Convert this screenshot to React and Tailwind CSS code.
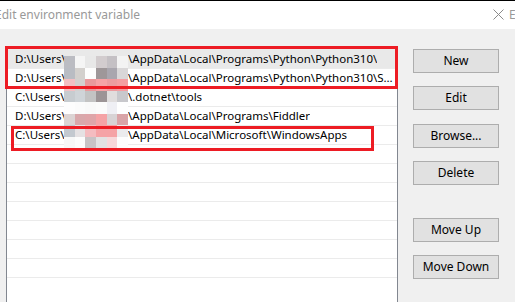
import React from 'react';

// pixelated username block, row by row
const MOSAIC = [
    ['#bbbcc2', '#f5f5f5', '#e8e8e8', '#d2ccce', '#c4c0c4', '#f3f3f3'],
    ['#b9bcc3', '#d3d0cd', '#fdfdfd', '#9e9799', '#a9a6ae', '#d9d7d8'],
    ['#f2c0c4', '#d3d0cf', '#e9999c', '#f5a3a6', '#ec9ca0', '#f49ea2'],
    ['#c7ccd0', '#cfd4d8', '#c3c3c3', '#9c9496', '#e0dddd', '#c8c8cc'],
    ['#fdfdfd', '#fbfbfb', '#f9f9f9', '#fbfbfb', '#efeff4', '#fefefe'],
    ['#dcd4d4', '#d9a8ab', '#dfa5a9', '#f5a3a6', '#d8d3d5', '#d9a4a8'],
    ['#c3c8cf', '#e5e1e3', '#f4bcc0', '#f5a3a6', '#f5a3a6', '#ebebed'],
    ['#f7f7f7', '#fcfcfc', '#c8c3c5', '#e2e2e2', '#f7d8da', '#fdfdfd'],
];

const ROWS = [
    { drive: 'D:\\Users\\', rest: '\\AppData\\Local\\Programs\\Python\\Python310\\', selected: true },
    { drive: 'D:\\Users\\', rest: '\\AppData\\Local\\Programs\\Python\\Python310\\Scripts\\' },
    { drive: 'C:\\Users\\', rest: '\\.dotnet\\tools' },
    { drive: 'D:\\Users\\', rest: '\\AppData\\Local\\Programs\\Fiddler' },
    { drive: 'C:\\Users\\', rest: '\\AppData\\Local\\Microsoft\\WindowsApps' },
];

function PathRow({ drive, rest, selected }) {
    return (
        <div className={`h-[19px] border-t border-[#ebebeb] flex items-center pl-[8px] pr-[3px] whitespace-nowrap text-[11.5px] ${selected ? 'bg-[#e9e9e9]' : ''}`}>
            <span className="w-[113px] shrink-0 overflow-hidden">{drive}</span>
            <span className="min-w-0 overflow-hidden text-ellipsis">{rest}</span>
        </div>
    );
}

function Btn({ label, className = '' }) {
    return (
        <div className={`h-[24px] w-[86px] bg-[#e1e1e1] border border-[#adadad] flex items-center justify-center text-black ${className}`}>
            {label}
        </div>
    );
}

export default function App() {
    return (
        <div className="w-[515px] h-[302px] overflow-hidden relative bg-[#f0f0f0] border-t border-black text-[12px] text-black" style={{ fontFamily: '"Segoe UI", "Noto Sans", sans-serif' }}>
            {/* title bar */}
            <div className="h-[28px] bg-white relative">
                <span className="absolute left-[-5px] top-[5px] text-[#999999] whitespace-nowrap">Edit environment variable</span>
                <svg className="absolute left-[493px] top-[8px]" width="11" height="11" viewBox="0 0 11 11">
                    <path d="M0.5 0.5 L10.5 10.5 M10.5 0.5 L0.5 10.5" stroke="#8a8a8a" strokeWidth="1" fill="none" />
                </svg>
                <span className="absolute left-[509px] top-[5px] text-[#999999]">E</span>
            </div>

            <div className="flex pt-[19px] pl-[6px]">
                {/* list */}
                <div className="w-[392px] h-[260px] bg-white border border-[#828790] shrink-0">
                    {ROWS.map((r, i) => <PathRow key={i} {...r} />)}
                    {Array.from({ length: 8 }).map((_, i) => (
                        <div key={`e${i}`} className="h-[19px] border-t border-[#ebebeb]" />
                    ))}
                </div>

                {/* buttons */}
                <div className="ml-[15px] flex flex-col pt-[1px]">
                    <Btn label="New" />
                    <Btn label="Edit" className="mt-[13px]" />
                    <Btn label="Browse..." className="mt-[14px]" />
                    <Btn label="Delete" className="mt-[13px]" />
                    <Btn label="Move Up" className="mt-[33px]" />
                    <Btn label="Move Down" className="mt-[13px]" />
                </div>
            </div>

            {/* pixelated username */}
            <div className="absolute left-[64px] top-[55px] w-[64px] h-[92px] grid grid-cols-6 grid-rows-8">
                {MOSAIC.flat().map((c, i) => <div key={i} style={{ backgroundColor: c }} />)}
            </div>

            {/* red annotation boxes */}
            <div className="absolute left-[5px] top-[45px] w-[393px] h-[43px] border-[3px] border-[#ed1c24]" />
            <div className="absolute left-[11px] top-[125px] w-[363px] h-[25px] border-[3px] border-[#ed1c24]" />
        </div>
    );
}
